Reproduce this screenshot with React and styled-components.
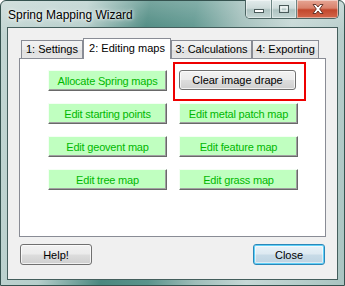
import React from 'react';
import styled, { createGlobalStyle, css } from 'styled-components';

const Global = createGlobalStyle`
  html, body {
    margin: 0;
    padding: 0;
    background: #ffffff;
  }
  * {
    box-sizing: border-box;
  }
`;

const Window = styled.div`
  width: 345px;
  height: 286px;
  display: flex;
  flex-direction: column;
  padding: 0 6px 5px 6px;
  border: 1px solid #35524f;
  border-radius: 6px 6px 0 0;
  background:
    linear-gradient(180deg, rgba(255, 255, 255, 0.25) 0%, rgba(255, 255, 255, 0) 12%),
    linear-gradient(
      100deg,
      #c3d6d3 0%,
      #b6cecb 22%,
      #4a887f 38%,
      #5a948c 50%,
      #9fbdb9 62%,
      #c6d8d6 75%,
      #a9c4c1 100%
    );
  font-family: 'Liberation Sans', Arial, sans-serif;
`;

const TitleBar = styled.div`
  height: 26px;
  display: flex;
  align-items: flex-start;
  justify-content: space-between;
`;

const Title = styled.div`
  padding: 7px 0 0 1px;
  font-size: 12px;
  line-height: 14px;
  color: #000000;
  text-shadow: 0 0 6px rgba(255, 255, 255, 0.9), 0 0 3px rgba(255, 255, 255, 0.9);
`;

const Captions = styled.div`
  display: flex;
  margin-top: -1px;
  margin-right: -1px;
  height: 19px;
  border: 1px solid #4c6462;
  border-top: none;
  border-radius: 0 0 5px 5px;
  overflow: hidden;
`;

const CaptionButton = styled.div`
  width: ${p => p.w}px;
  height: 100%;
  display: flex;
  align-items: center;
  justify-content: center;
  border-left: ${p => (p.first ? 'none' : '1px solid #6d8684')};
  background: ${p =>
    p.danger
      ? 'linear-gradient(180deg, #e6a594 0%, #d9826c 45%, #c2472c 55%, #d3664a 100%)'
      : 'linear-gradient(180deg, #e3ecec 0%, #cfdcdb 45%, #aec3c1 55%, #c5d6d4 100%)'};
  box-shadow: inset 0 0 0 1px rgba(255, 255, 255, 0.45);
`;

const Client = styled.div`
  flex: 1;
  display: flex;
  flex-direction: column;
  background: #f0f0f0;
  border: 1px solid #445e5c;
  padding: 10px 11px 12px 11px;
`;

const TabStrip = styled.div`
  display: flex;
  align-items: flex-start;
  height: 21px;
  margin-bottom: -1px;
  padding-left: 2px;
  position: relative;
  z-index: 1;
`;

const Tab = styled.div`
  width: ${p => p.w}px;
  height: 18px;
  margin-top: 2px;
  border: 1px solid #898c95;
  border-bottom: none;
  background: linear-gradient(180deg, #f3f3f3 0%, #ebebeb 50%, #dedede 51%, #e6e6e6 100%);
  font-size: 11px;
  line-height: 17px;
  text-align: center;
  color: #000000;
  white-space: nowrap;
  ${p =>
    p.active &&
    css`
      height: 21px;
      margin-top: 0;
      background: #ffffff;
      line-height: 19px;
    `}
`;

const Panel = styled.div`
  height: 179px;
  border: 1px solid #898c95;
  background: #ffffff;
  padding: 11px 0 0 28px;
`;

const Grid = styled.div`
  display: grid;
  grid-template-columns: 119px 119px;
  grid-auto-rows: 21px;
  column-gap: 12px;
  row-gap: 12px;
`;

const GreenButton = styled.div`
  display: flex;
  align-items: center;
  justify-content: center;
  background: #c0ffc0;
  border: 1px solid;
  border-color: #f4fff4 #696969 #696969 #f4fff4;
  box-shadow: inset -1px -1px 0 #a0a0a0;
  color: #00b800;
  font-size: 11px;
  letter-spacing: -0.2px;
  white-space: nowrap;
`;

const Highlight = styled.div`
  position: relative;
  display: flex;
  justify-content: flex-start;
  &::after {
    content: '';
    position: absolute;
    left: -6px;
    top: -8px;
    width: 129px;
    height: 35px;
    border: 2px solid #ee0000;
    pointer-events: none;
  }
`;

const PushButton = styled.div`
  width: ${p => p.w}px;
  height: ${p => p.h}px;
  display: flex;
  align-items: center;
  justify-content: center;
  border: 1px solid #707070;
  border-radius: 3px;
  background: linear-gradient(180deg, #f2f2f2 0%, #ebebeb 48%, #dddddd 52%, #cfcfcf 100%);
  box-shadow: inset 0 0 0 1px rgba(255, 255, 255, 0.7);
  font-size: 11px;
  color: #000000;
  white-space: nowrap;
  ${p =>
    p.primary &&
    css`
      border-color: #2b87b8;
      background: linear-gradient(180deg, #e9f3f9 0%, #dde9f1 48%, #c8dbe7 52%, #bdd3e2 100%);
      box-shadow: inset 0 0 0 1px #5fd0f8, inset 0 0 0 2px rgba(255, 255, 255, 0.5);
    `}
`;

const Footer = styled.div`
  display: flex;
  justify-content: space-between;
  padding: 7px 1px 0 1px;
`;

const MinIcon = () => (
  <svg width="12" height="10" viewBox="0 0 12 10">
    <rect x="1.5" y="5.5" width="9" height="3" fill="#ffffff" stroke="#4a5a5a" strokeWidth="1" />
  </svg>
);

const MaxIcon = () => (
  <svg width="12" height="10" viewBox="0 0 12 10">
    <rect x="1.5" y="1.5" width="9" height="7" fill="none" stroke="#4a5a5a" strokeWidth="1" />
    <rect x="3" y="3" width="6" height="4" fill="none" stroke="#ffffff" strokeWidth="1" />
  </svg>
);

const CloseIcon = () => (
  <svg width="14" height="12" viewBox="0 0 14 12">
    <path
      d="M2 1.5 L5 1.5 L7 4 L9 1.5 L12 1.5 L8.7 6 L12 10.5 L9 10.5 L7 8 L5 10.5 L2 10.5 L5.3 6 Z"
      fill="#ffffff"
      stroke="#5a2a20"
      strokeWidth="0.9"
      strokeLinejoin="round"
    />
  </svg>
);

const tabs = [
  { label: '1: Settings', w: 62 },
  { label: '2: Editing maps', w: 88, active: true },
  { label: '3: Calculations', w: 81 },
  { label: '4: Exporting', w: 67 },
];

export default function App() {
  return (
    <>
      <Global />
      <Window>
        <TitleBar>
          <Title>Spring Mapping Wizard</Title>
          <Captions>
            <CaptionButton w={25} first>
              <MinIcon />
            </CaptionButton>
            <CaptionButton w={25}>
              <MaxIcon />
            </CaptionButton>
            <CaptionButton w={42} danger>
              <CloseIcon />
            </CaptionButton>
          </Captions>
        </TitleBar>
        <Client>
          <TabStrip>
            {tabs.map(t => (
              <Tab key={t.label} w={t.w} active={t.active}>
                {t.label}
              </Tab>
            ))}
          </TabStrip>
          <Panel>
            <Grid>
              <GreenButton>Allocate Spring maps</GreenButton>
              <Highlight>
                <PushButton w={117} h={20}>
                  Clear image drape
                </PushButton>
              </Highlight>
              <GreenButton>Edit starting points</GreenButton>
              <GreenButton>Edit metal patch map</GreenButton>
              <GreenButton>Edit geovent map</GreenButton>
              <GreenButton>Edit feature map</GreenButton>
              <GreenButton>Edit tree map</GreenButton>
              <GreenButton>Edit grass map</GreenButton>
            </Grid>
          </Panel>
          <Footer>
            <PushButton w={72} h={21}>
              Help!
            </PushButton>
            <PushButton w={72} h={21} primary>
              Close
            </PushButton>
          </Footer>
        </Client>
      </Window>
    </>
  );
}
